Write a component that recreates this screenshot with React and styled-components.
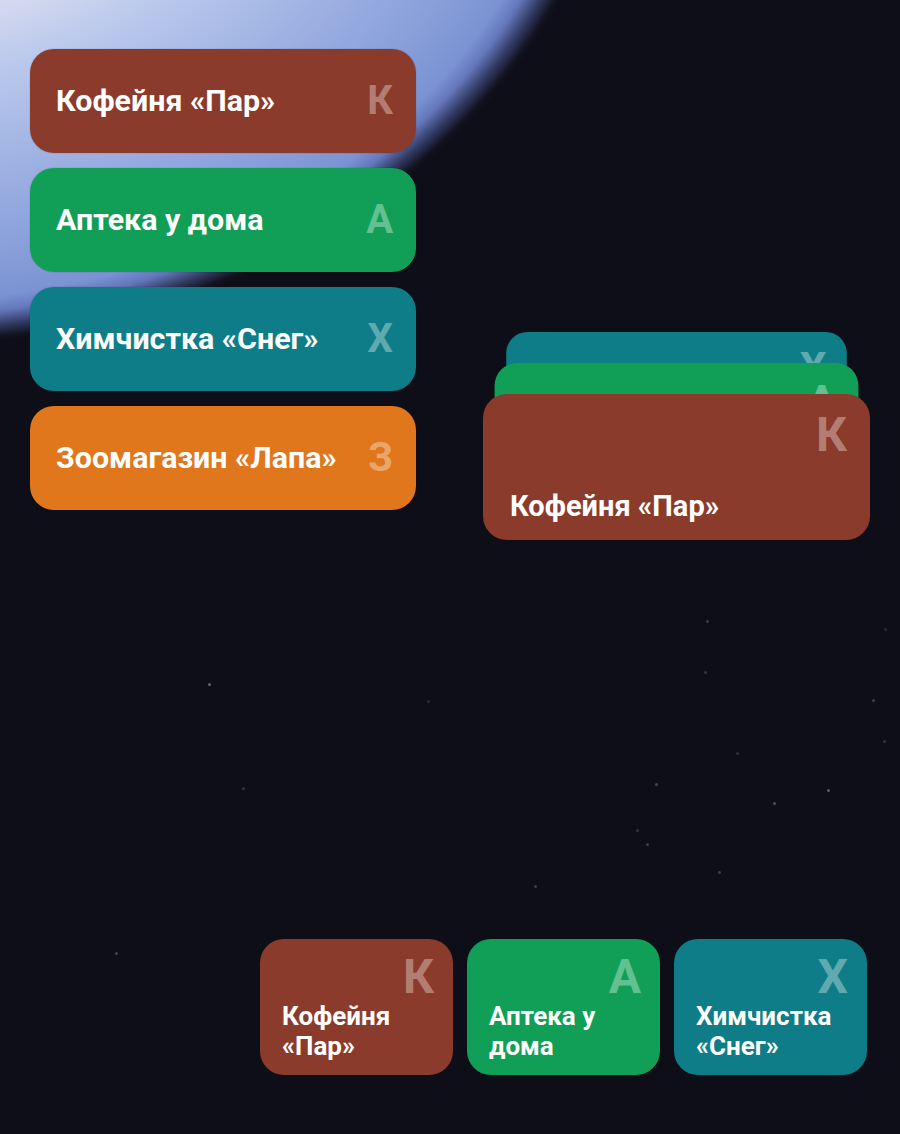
import React from "react";
import styled, { createGlobalStyle } from "styled-components";

const GlobalStyle = createGlobalStyle`
  html, body {
    margin: 0;
    padding: 0;
    background: #0e0e19;
  }
  body {
    font-family: Roboto, "Noto Sans", "Liberation Sans", sans-serif;
    -webkit-font-smoothing: antialiased;
  }
  * {
    box-sizing: border-box;
  }
`;

const shops = [
  { id: "coffee", title: "Кофейня «Пар»", letter: "К", color: "#8b3b2c" },
  { id: "pharmacy", title: "Аптека у дома", letter: "А", color: "#119f58" },
  { id: "laundry", title: "Химчистка «Снег»", letter: "Х", color: "#0f7d87" },
  { id: "pets", title: "Зоомагазин «Лапа»", letter: "З", color: "#e0771c" }
];

const stars = [
  [208, 683, 0.45], [242, 787, 0.2], [827, 789, 0.4], [773, 802, 0.35],
  [655, 783, 0.3], [646, 843, 0.25], [636, 829, 0.2], [704, 671, 0.2],
  [736, 752, 0.18], [872, 699, 0.25], [883, 740, 0.2], [706, 620, 0.25],
  [534, 885, 0.25], [718, 871, 0.25], [115, 952, 0.3], [884, 628, 0.15],
  [427, 700, 0.15], [590, 1010, 0.12]
];

const Page = styled.div`
  position: relative;
  min-height: 100vh;
  display: flex;
  flex-direction: column;
  padding: 49px 30px 59px 30px;
  overflow: hidden;
  background-color: #0e0e19;
  background-image: radial-gradient(
    728px 596px at -100px -250px,
    #f4f2f7 0%,
    #dfe1f1 40%,
    #bac8ec 55%,
    #a0b3e3 70%,
    #889fda 85%,
    #7c93d3 92.5%,
    #6477bb 95%,
    #30385f 97.5%,
    #12131f 99.3%,
    #0e0e19 100%
  );
`;

const Star = styled.span`
  position: absolute;
  width: 3px;
  height: 3px;
  border-radius: 50%;
  background: #c8cbe0;
`;

const TopArea = styled.div`
  position: relative;
  display: flex;
  align-items: flex-start;
  gap: 67px;
`;

const List = styled.div`
  display: flex;
  flex-direction: column;
  gap: 15px;
  width: 386px;
`;

const ListCard = styled.div`
  height: 104px;
  border-radius: 24px;
  background: ${({ $color }) => $color};
  display: flex;
  align-items: center;
  justify-content: space-between;
  padding: 0 23px 0 26px;
  box-shadow: 0 0 0 1px rgba(0, 0, 0, 0.06);
`;

const Title = styled.span`
  color: #fff;
  font-weight: 700;
  font-size: ${({ $size }) => $size}px;
  line-height: ${({ $lh }) => $lh};
`;

const Letter = styled.span`
  color: rgba(255, 255, 255, 0.36);
  font-weight: 700;
  font-size: ${({ $size }) => $size}px;
  line-height: 1;
`;

const Deck = styled.div`
  position: relative;
  width: 387px;
  height: 208px;
  margin-top: 283px;
`;

const DeckCard = styled.div`
  position: absolute;
  left: 0;
  top: 62px;
  width: 100%;
  height: 146px;
  border-radius: 24px;
  background: ${({ $color }) => $color};
  transform-origin: top center;
  transform: translateY(${({ $depth }) => -31 * $depth}px)
    scale(${({ $depth }) => 1 - 0.06 * $depth});
  z-index: ${({ $depth }) => 10 - $depth};
  display: flex;
  flex-direction: column;
  justify-content: space-between;
  padding: 17px 23px 16px 27px;
  ${Letter} {
    align-self: flex-end;
  }
`;

const BottomRow = styled.div`
  position: relative;
  margin-top: auto;
  align-self: flex-end;
  margin-right: 3px;
  display: flex;
  gap: 14px;
`;

const TileCard = styled.div`
  width: 193px;
  height: 136px;
  border-radius: 24px;
  background: ${({ $color }) => $color};
  display: flex;
  flex-direction: column;
  justify-content: space-between;
  padding: 14px 19px 14px 22px;
  ${Letter} {
    align-self: flex-end;
  }
`;

export default function App() {
  const deck = shops.slice(0, 3);
  return (
    <>
      <GlobalStyle />
      <Page>
        {stars.map(([x, y, o], i) => (
          <Star key={i} style={{ left: x, top: y, opacity: o }} />
        ))}
        <TopArea>
          <List>
            {shops.map((s) => (
              <ListCard key={s.id} $color={s.color}>
                <Title $size={30.4} $lh={1.2}>
                  {s.title}
                </Title>
                <Letter $size={40}>{s.letter}</Letter>
              </ListCard>
            ))}
          </List>
          <Deck>
            {deck
              .map((s, i) => (
                <DeckCard key={s.id} $color={s.color} $depth={i}>
                  <Letter $size={48}>{s.letter}</Letter>
                  <Title $size={29} $lh={1.2}>
                    {s.title}
                  </Title>
                </DeckCard>
              ))
              .reverse()}
          </Deck>
        </TopArea>
        <BottomRow>
          {deck.map((s) => (
            <TileCard key={s.id} $color={s.color}>
              <Letter $size={48}>{s.letter}</Letter>
              <Title $size={26} $lh="30px">
                {s.title}
              </Title>
            </TileCard>
          ))}
        </BottomRow>
      </Page>
    </>
  );
}
